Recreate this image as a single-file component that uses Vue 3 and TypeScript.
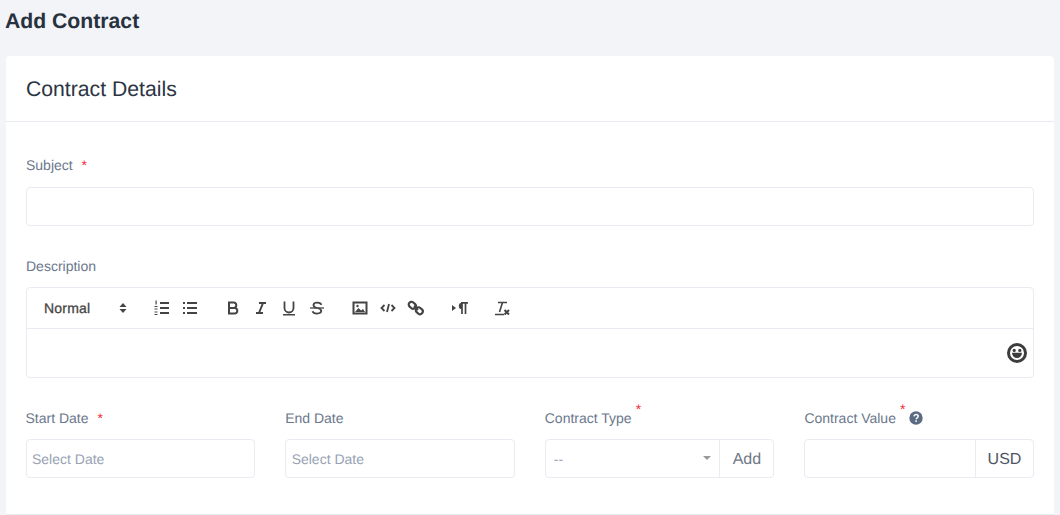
<script setup lang="ts">
const dummy = 0;
</script>

<template>
  <div class="page">
    <h1 class="title">Add Contract</h1>
    <section class="card">
      <header class="card-head">Contract Details</header>
      <div class="card-body">
        <div class="field subject">
          <label class="lbl">Subject <span class="req gap">*</span></label>
          <div class="input"></div>
        </div>
        <div class="field desc">
          <label class="lbl">Description</label>
          <div class="editor">
            <div class="toolbar">
              <span class="normal">Normal</span>
              <svg class="updown" width="8" height="12" viewBox="0 0 8 12"><path d="M4 1 L7.5 5 H0.5Z M4 11 L7.5 7 H0.5Z" fill="#444"/></svg>
              <svg class="ic i-ol" viewBox="0 0 18 18"><g stroke="#444" stroke-width="2" fill="none"><path d="M8 4h9M8 9h9M8 14h9"/></g><g fill="#444"><rect x="3.500" y="1.500" width="1.200" height="4"/><rect x="2.500" y="7" width="3" height="1"/><rect x="2.500" y="9.500" width="3" height="1"/><rect x="2.500" y="12.500" width="3" height="1"/><rect x="2.500" y="15" width="3" height="1"/></g></svg>
              <svg class="ic i-ul" viewBox="0 0 18 18"><g stroke="#444" stroke-width="2" fill="none"><path d="M7 4H17M7 9H17M7 14H17M3 4h2M3 9h2M3 14h2"/></g></svg>
              <svg class="ic i-b" viewBox="0 0 18 18"><path d="M5 3.500h5a2.800 2.800 0 0 1 0 5.500H5zM5 9h6a2.800 2.800 0 0 1 0 5.500H5z" fill="none" stroke="#444" stroke-width="2"/></svg>
              <svg class="ic i-i" viewBox="0 0 18 18"><path d="M7 4h7M4 14h7M11 4 7 14" fill="none" stroke="#444" stroke-width="2"/></svg>
              <svg class="ic i-u" viewBox="0 0 18 18"><path d="M4.500 2.500v6.500a4.500 4.500 0 0 0 9 0V2.500" fill="none" stroke="#444" stroke-width="1.800"/><rect x="3" y="15" width="12" height="1.500" fill="#444"/></svg>
              <svg class="ic i-s" viewBox="0 0 18 18"><path d="M13.300 5.800C12.800 3 5.800 2.700 5.500 5.800c-.2 1.700 1.200 2.500 3.500 3.200M9.500 9c2.500.7 4 1.400 3.800 3-.4 3.300-7.800 3.400-8.800.2" fill="none" stroke="#444" stroke-width="1.800"/><path d="M2 9h14" stroke="#444" stroke-width="1.300"/></svg>
              <svg class="ic i-img" viewBox="0 0 18 18"><rect x="2.500" y="3.500" width="13" height="11" fill="none" stroke="#444" stroke-width="2"/><path d="M4 13l3.500-4 2.500 2.500 2-1.500 2 3z" fill="#444"/><circle cx="6.500" cy="7" r="1.200" fill="#444"/></svg>
              <svg class="ic i-code" viewBox="0 0 18 18"><path d="M5.500 6 2.500 9l3 3M12.500 6l3 3-3 3M10 5 8 13" fill="none" stroke="#444" stroke-width="1.800"/></svg>
              <svg class="ic i-link" viewBox="0 0 18 18"><g fill="none" stroke="#444" stroke-width="2.200"><rect x="1.500" y="3.500" width="7.500" height="5.500" rx="2.700" transform="rotate(42 5.250 6.250)"/><rect x="8.500" y="9" width="7.500" height="5.500" rx="2.700" transform="rotate(42 12.250 11.750)"/></g><path d="M7 7l4 4" stroke="#444" stroke-width="2"/></svg>
              <svg class="ic i-para" viewBox="0 0 18 18"><path d="M1 6 5 9l-4 3z" fill="#444"/><path d="M10 3.800h7M11 3.800V15M14.500 3.800V15" stroke="#444" stroke-width="1.700"/><path d="M11 3.800a3.200 3.200 0 0 0 0 6.400z" fill="#444"/></svg>
              <svg class="ic i-clear" viewBox="0 0 18 18"><path d="M5 3.500h9M9.500 3.500 6.500 13M2 15.500h9" fill="none" stroke="#444" stroke-width="1.600"/><path d="M11.500 11l4.500 4.500M16 11l-4.500 4.500" stroke="#444" stroke-width="2"/></svg>
            </div>
            <div class="editor-area">
              <svg class="smile" width="20" height="20" viewBox="0 0 20 20"><circle cx="10" cy="10" r="8.500" fill="none" stroke="#3c3c3c" stroke-width="3"/><circle cx="7.200" cy="7.400" r="1.600" fill="#3c3c3c"/><circle cx="12.800" cy="7.400" r="1.600" fill="#3c3c3c"/><path d="M5 9.800h10a5 5.200 0 0 1-10 0z" fill="#3c3c3c"/></svg>
            </div>
          </div>
        </div>
        <div class="row">
          <div class="field">
            <label class="lbl">Start Date <span class="req gap">*</span></label>
            <div class="input ph">Select Date</div>
          </div>
          <div class="field">
            <label class="lbl">End Date</label>
            <div class="input ph">Select Date</div>
          </div>
          <div class="field">
            <label class="lbl">Contract Type<sup class="req">*</sup></label>
            <div class="group">
              <div class="select"><span>--</span><i class="caret"></i></div>
              <div class="addon add">Add</div>
            </div>
          </div>
          <div class="field">
            <label class="lbl">Contract Value<sup class="req">*</sup>
              <svg class="help" width="14" height="14" viewBox="0 0 14 14"><circle cx="7" cy="7" r="6.700" fill="#5c6b82"/><path d="M4.900 5.400c.2-1.300 1.100-1.900 2.200-1.900 1.200 0 2.100.7 2.100 1.800 0 1.500-2 1.500-2 3" fill="none" stroke="#fff" stroke-width="1.500"/><rect x="6.300" y="9.300" width="1.600" height="1.600" fill="#fff"/></svg>
            </label>
            <div class="group">
              <div class="blank"></div>
              <div class="addon usd">USD</div>
            </div>
          </div>
        </div>
      </div>
    </section>
  </div>
</template>

<style>
html, body { margin: 0; background: #f2f4f8; overflow: hidden; }
</style>

<style scoped>
.page {
  height: 515px;
  box-sizing: border-box;
  padding: 0 6px;
  background: #f2f4f8;
  font-family: "Liberation Sans", Arial, sans-serif;
  text-rendering: geometricPrecision;
  overflow: hidden;
}
.title {
  margin: 0 0 0 -1px;
  height: 56px;
  padding-top: 9px;
  box-sizing: border-box;
  font-size: 21.200px;
  line-height: 26px;
  font-weight: 700;
  color: #28313e;
}
.card {
  height: 459px;
  box-sizing: border-box;
  background: #fff;
  border-radius: 4px 4px 0 0;
  border-bottom: 1px solid #e8ebf1;
}
.card-head {
  height: 66px;
  box-sizing: border-box;
  padding: 1px 20px 0;
  line-height: 65px;
  font-size: 21.200px;
  color: #2c3543;
  border-bottom: 1px solid #e8ebf1;
}
.card-body {
  padding: 33px 20px 0;
}
.lbl {
  display: block;
  font-size: 14px;
  line-height: 20px;
  color: #6b778c;
  margin-bottom: 12px;
  white-space: nowrap;
}
.req { color: #f5262d; font-size: 14px; }
.gap { margin-left: 5px; }
sup.req { font-size: 14px; line-height: 0; vertical-align: 9px; margin-left: 4px; }
.input {
  height: 39px;
  box-sizing: border-box;
  border: 1px solid #e8ebf1;
  border-radius: 4px;
  background: #fff;
}
.ph {
  padding: 0 5.500px;
  line-height: 38px;
  font-size: 14px;
  color: #98a2b3;
}
.desc { margin-top: 30px; }
.desc .lbl { margin-bottom: 11px; }
.editor {
  border: 1px solid #e8ebf1;
  border-radius: 4px;
  height: 91px;
  box-sizing: border-box;
}
.toolbar {
  height: 41px;
  box-sizing: border-box;
  border-bottom: 1px solid #e8ebf1;
  display: flex;
  align-items: center;
  padding-left: 17px;
}
.normal { font-size: 14px; color: #444; width: 75px; -webkit-text-stroke: 0.3px #444; letter-spacing: 0.2px; }
.updown { margin-right: 25px; }
.ic { width: 18px; height: 18px; flex: none; }
.i-ol { margin-right: 10px; margin-left: 0; }
.i-ul { margin-right: 26px; }
.i-b, .i-i, .i-u { margin-right: 10px; }
.i-s { margin-right: 25px; }
.i-img, .i-code { margin-right: 10px; }
.i-link { margin-right: 26px; }
.i-para { margin-right: 24px; }
.editor-area {
  height: 48px;
  display: flex;
  align-items: center;
  justify-content: flex-end;
  padding-right: 6px;
}
.row {
  margin-top: 30px;
  margin-left: -0.500px;
  display: grid;
  grid-template-columns: repeat(4, 1fr);
  gap: 30px;
}
.row .lbl { margin-bottom: 11px; }
.group {
  display: flex;
  height: 39px;
  box-sizing: border-box;
  border: 1px solid #e8ebf1;
  border-radius: 4px;
}
.select {
  flex: 1;
  display: flex;
  align-items: center;
  justify-content: space-between;
  padding: 0 8px 0 8px;
  font-size: 14px;
  color: #98a2b3;
}
.caret {
  width: 0; height: 0;
  margin-bottom: 2px;
  border-left: 4px solid transparent;
  border-right: 4px solid transparent;
  border-top: 4px solid #999;
}
.blank { flex: 1; }
.addon {
  display: flex;
  align-items: center;
  justify-content: center;
  padding-top: 3px;
  box-sizing: border-box;
  border-left: 1px solid #e8ebf1;
  font-size: 16px;
  color: #6f7785;
}
.add { width: 54px; }
.usd { width: 58px; color: #4d5563; }
.help { vertical-align: -2px; margin-left: 4px; }
</style>
